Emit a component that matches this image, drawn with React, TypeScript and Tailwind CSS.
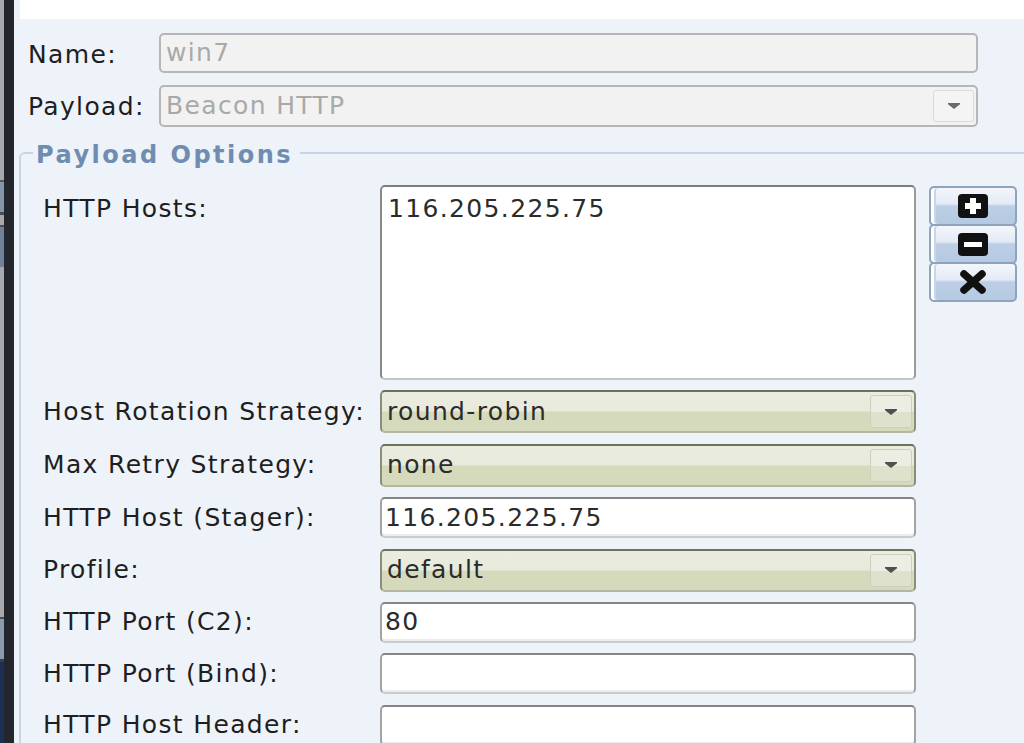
import React from "react";

const label = "text-[25px] leading-[28px] tracking-[1.35px] text-[#1e1e1e] whitespace-nowrap";
const fieldText = "text-[25px] leading-[28px] tracking-[1.35px] text-[#2b2b2b] whitespace-nowrap";

function Arrow({ color = "#4f4f4f" }: { color?: string }) {
  return (
    <svg width="12" height="6" viewBox="0 0 12 6">
      <path d="M0 0 H12 V1.2 L6 6 L0 1.2 Z" fill={color} />
    </svg>
  );
}

function Combo({ value }: { value: string }) {
  return (
    <div className="w-[536px] h-[43px] flex items-center rounded-[5px] border-2 border-t-[#6c705d] border-x-[#8a8d79] border-b-[#b3b6a0] bg-[linear-gradient(to_bottom,#eaecdf_0%,#e8eadc_48%,#d6dabd_52%,#d6dabd_100%)] pl-[5px] pr-[2px] py-[3px]">
      <span className={`flex-1 ${fieldText}`}>{value}</span>
      <div className="w-[42px] h-full flex items-center justify-center rounded-[3px] border border-[#cdd0ba] bg-[linear-gradient(to_bottom,#eceee3_0%,#eceee3_50%,#dee1cb_52%,#dee1cb_100%)]">
        <Arrow />
      </div>
    </div>
  );
}

function TextField({ value }: { value: string }) {
  return (
    <div className="w-[536px] h-[41px] flex items-center rounded-[5px] border-2 border-t-[#858585] border-x-[#a3a3a3] border-b-[#cbcbcb] bg-white pl-[3px] shadow-[inset_0_-2px_0_#ececec]">
      <span className={fieldText}>{value}</span>
    </div>
  );
}

function Row({ name, children }: { name: string; children: React.ReactNode }) {
  return (
    <div className="flex items-center">
      <div className={`w-[337px] ${label}`}>{name}</div>
      {children}
    </div>
  );
}

function SideButton({ children, first }: { children: React.ReactNode; first?: boolean }) {
  return (
    <div
      className={`w-[88px] h-[40px] ${first ? "" : "-mt-[2px]"} flex items-center justify-center rounded-[5px] border-2 border-[#8ea3bd] bg-[linear-gradient(to_bottom,#f3f6fb_0%,#e4ebf5_44%,#bccfe6_50%,#b5c9e2_100%)] shadow-[inset_3px_0_0_#ffffff,inset_5px_0_0_#c9d6e6]`}
    >
      {children}
    </div>
  );
}

export default function App() {
  return (
    <div className="w-[1024px] h-[743px] overflow-hidden flex bg-[#eef2f9] font-['DejaVu_Sans',sans-serif]">
      {/* left dark edge */}
      <div className="w-[14px] shrink-0 flex">
        <div className="w-[4px] flex flex-col bg-[#a7a9ad]">
          <div className="h-[180px]" />
          <div className="h-[2px] bg-[#55595f]" />
          <div className="h-[30px] bg-[#8596aa]" />
          <div className="h-[3px] bg-[#4a4f56]" />
          <div className="h-[10px]" />
          <div className="h-[2px] bg-[#4a4f56]" />
          <div className="h-[40px] bg-[#6f8299]" />
          <div className="h-[350px]" />
          <div className="h-[2px] bg-[#4a4f56]" />
          <div className="h-[40px] bg-[#8a9bb0]" />
          <div className="h-[3px] bg-[#3b3f45]" />
          <div className="flex-1 bg-[#1a2f52]" />
        </div>
        <div className="flex-1 bg-[#23262c]" />
      </div>

      <div className="flex-1 flex flex-col min-w-0">
        <div className="h-[19px] ml-[6px] bg-white shrink-0" />

        <div className="pl-[14px] pr-[46px] pt-[14px] flex flex-col gap-[12px]">
          <div className="flex items-center">
            <div className={`w-[131px] mt-[3px] ${label}`}>Name:</div>
            <div className="flex-1 h-[40px] flex items-center rounded-[5px] border-2 border-[#b6b6b6] bg-[#f2f2f2] pl-[5px]">
              <span className="text-[25px] leading-[28px] tracking-[1.35px] text-[#a9a9a9]">win7</span>
            </div>
          </div>
          <div className="flex items-center">
            <div className={`w-[131px] mt-[2px] ${label}`}>Payload:</div>
            <div className="flex-1 h-[42px] flex items-center rounded-[5px] border-2 border-[#b6b6b6] bg-[#f2f2f2] pl-[5px] pr-[2px] py-[3px]">
              <span className="flex-1 text-[25px] leading-[28px] tracking-[1.35px] text-[#a9a9a9]">Beacon HTTP</span>
              <div className="w-[41px] h-full flex items-center justify-center rounded-[3px] border border-[#dadada] bg-[#f4f4f4]">
                <Arrow color="#6a6a6a" />
              </div>
            </div>
          </div>
        </div>

        {/* Payload Options group */}
        <div className="ml-[5px] mt-[13px] flex flex-col flex-1">
          <div className="flex items-stretch h-[26px]">
            <div className="w-[14px] flex flex-col">
              <div className="h-[12px]" />
              <div className="flex-1 border-l-2 border-t-2 border-[#c8d4e3] rounded-tl-[6px]" />
            </div>
            <div className="px-[3px] pt-[4px] flex items-center text-[24px] leading-[26px] tracking-[2.5px] font-bold text-[#6e8db0] whitespace-nowrap">
              Payload Options
            </div>
            <div className="flex-1 flex flex-col ml-[4px]">
              <div className="h-[12px]" />
              <div className="h-[2px] bg-[#c8d4e3]" />
            </div>
          </div>

          <div className="flex-1 border-l-2 border-[#c8d4e3] pl-[22px] pt-[19px] flex flex-col gap-[10.4px]">
            <div className="flex items-start">
              <div className={`w-[337px] mt-[10px] ${label}`}>HTTP Hosts:</div>
              <div className="w-[536px] h-[195px] rounded-[5px] border-2 border-t-[#7d7d7d] border-l-[#8a8a8a] border-r-[#9b9b9b] border-b-[#c4c4c4] bg-white pl-[6px] pt-[8px]">
                <span className={fieldText}>116.205.225.75</span>
              </div>
              <div className="ml-[13px] flex flex-col mt-[1px]">
                <SideButton first>
                  <svg width="30" height="24" viewBox="0 0 30 24">
                    <rect x="0" y="0" width="30" height="24" rx="4" fill="#111" />
                    <rect x="12" y="4" width="6" height="16" fill="#fff" />
                    <rect x="7" y="9" width="16" height="6" fill="#fff" />
                  </svg>
                </SideButton>
                <SideButton>
                  <svg width="30" height="23" viewBox="0 0 30 23">
                    <rect x="0" y="0" width="30" height="23" rx="4" fill="#111" />
                    <rect x="6" y="9" width="18" height="5" fill="#fff" />
                  </svg>
                </SideButton>
                <SideButton>
                  <svg width="30" height="24" viewBox="0 0 30 24">
                    <path d="M6 4 L24 20 M24 4 L6 20" stroke="#111" strokeWidth="7.5" strokeLinecap="round" />
                  </svg>
                </SideButton>
              </div>
            </div>

            <Row name="Host Rotation Strategy:">
              <Combo value="round-robin" />
            </Row>
            <Row name="Max Retry Strategy:">
              <Combo value="none" />
            </Row>
            <Row name="HTTP Host (Stager):">
              <TextField value="116.205.225.75" />
            </Row>
            <Row name="Profile:">
              <Combo value="default" />
            </Row>
            <Row name="HTTP Port (C2):">
              <TextField value="80" />
            </Row>
            <Row name="HTTP Port (Bind):">
              <TextField value="" />
            </Row>
            <Row name="HTTP Host Header:">
              <TextField value="" />
            </Row>
          </div>
        </div>
      </div>
    </div>
  );
}
